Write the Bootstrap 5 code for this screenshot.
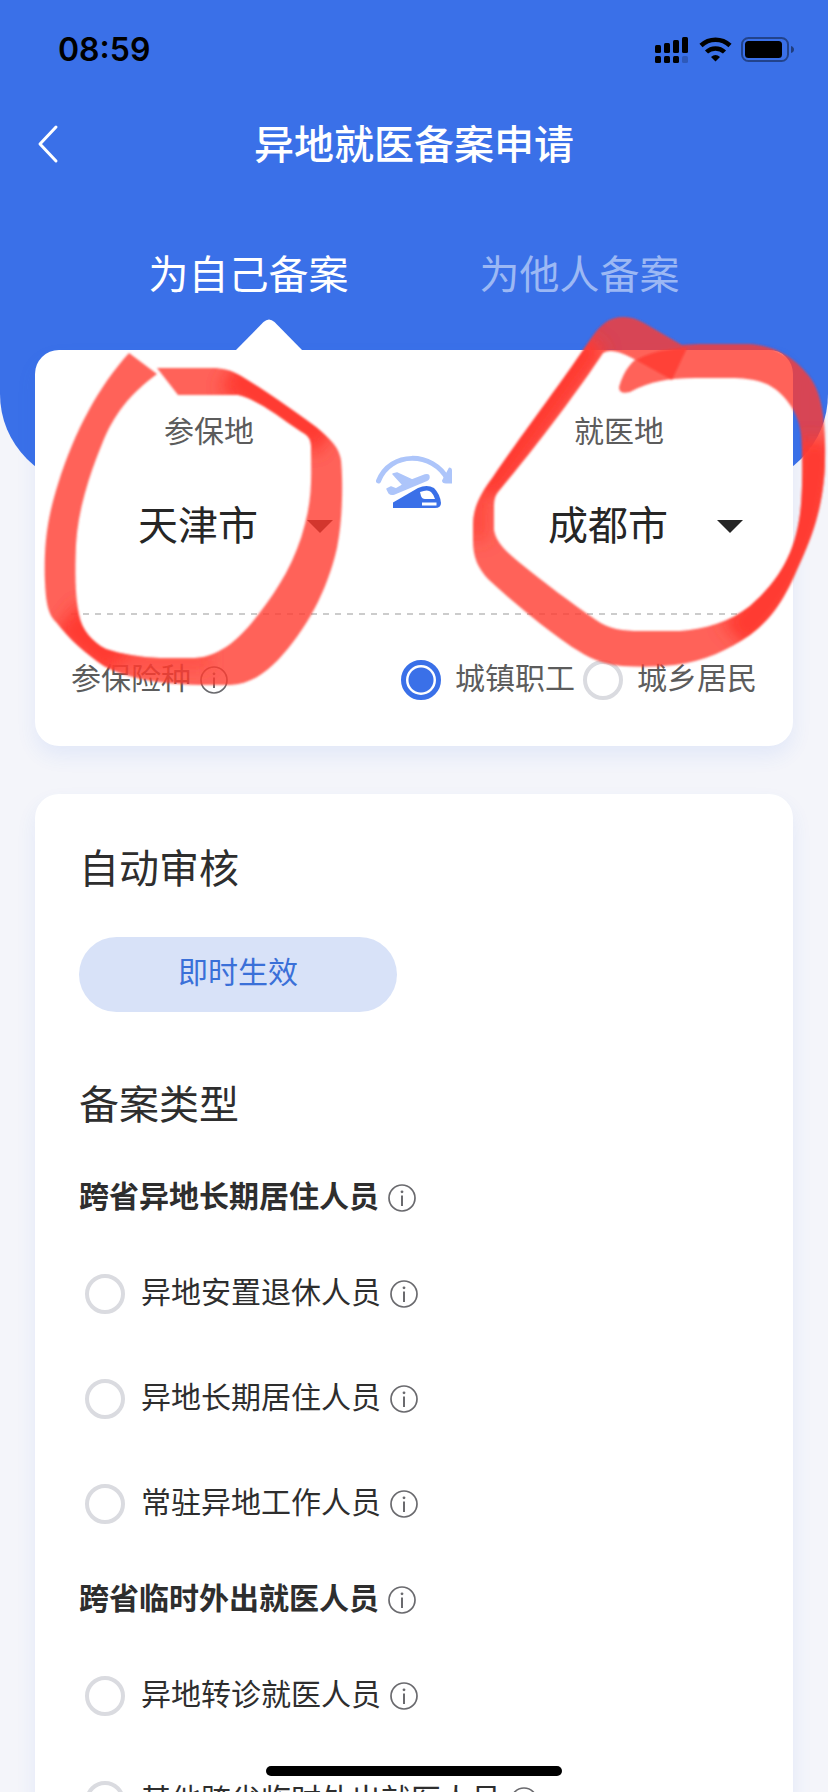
<!DOCTYPE html>
<html lang="zh-CN">
<head>
<meta charset="utf-8">
<meta name="viewport" content="width=device-width, initial-scale=1">
<title>异地就医备案申请</title>
<link href="https://cdn.jsdelivr.net/npm/bootstrap@5.3.0/dist/css/bootstrap.min.css" rel="stylesheet">
<style>
  :root { --brand: #3a70e8; --ink: #2e2e2e; --muted: #5c5c5c; }
  body { font-family: "Noto Sans CJK SC", sans-serif; font-size: 30px; line-height: 44px; color: var(--ink); background: #f4f5fa; }
  .screen { height: 100vh; }
  .hero { background: var(--brand); border-radius: 0 0 92px 92px; padding-bottom: 136px; }
  .status-bar { height: 96px; padding: 4px 34px 0 58px; color: #000; }
  .clock { font-family: Inter, sans-serif; font-size: 32px; font-weight: 600; }
  .title-bar { height: 96px; }
  .title-bar h1 { font-size: 40px; line-height: 60px; font-weight: 500; padding-bottom: 4px; }
  .back-btn { left: 24px; top: 20px; width: 56px; height: 56px; }
  .tab-row { padding: 50px 83px 48px; }
  .tab-btn { flex: 1 1 0; font-size: 40px; line-height: 60px; color: #9cb8f4; }
  .tab-btn.active { color: #fff; }
  .content { margin-top: -136px; padding: 0 35px; }
  .panel { background: #fff; border-radius: 24px; box-shadow: 0 10px 20px rgba(58, 112, 232, .09); }
  .place-panel { padding: 57px 36px 0; height: 396px; }
  .pointer { left: 200px; top: -31px; }
  .place { flex: 0 1 276px; }
  .place label, .kind-row { color: var(--muted); }
  .place-select { appearance: none; border: 0; width: 100%; font-size: 40px; line-height: 60px; height: 60px; padding: 0 56px 0 67px; margin-top: 42px; color: #262626;
    background: url("data:image/svg+xml,%3Csvg xmlns='http://www.w3.org/2000/svg' width='26' height='13'%3E%3Cpath d='M0 0h26L13 13z' fill='%23262626'/%3E%3C/svg%3E") no-repeat right 14px bottom 20px; }
  .trip-icon { margin-top: 47px; }
  .dashes { height: 2px; margin-top: 60px; background: repeating-linear-gradient(90deg, #ccc 0 6px, transparent 6px 12px); }
  .kind-row { margin-top: 39px; }
  .lift { padding-bottom: 8px; }
  .kind-label { margin-left: 14px; }
  .ring { appearance: none; flex: none; width: 40px; height: 40px; margin: 0; border: 4px solid #dadbe0; border-radius: 50%; background: #fff; }
  .ring:checked { border: 5px solid var(--brand); background: radial-gradient(circle, var(--brand) 0 12px, #fff 13px); }
  .info-btn { border: 0; background: none; padding: 0; margin-left: 9px; width: 28px; height: 28px; display: flex; color: #6a6a6e; }
  .detail-panel { margin-top: 48px; padding: 42px 44px; min-height: 1100px; }
  .detail-panel h2 { font-size: 40px; line-height: 60px; font-weight: 400; }
  .instant-btn { width: 318px; height: 75px; margin: 41px 0 60px; border: 0; background: #d8e2f8; color: #3a70d8; font-size: 30px; line-height: 44px; padding: 10px 0 20px; }
  .record-heading { margin-bottom: 22px; }
  .group-title { height: 87px; font-size: 30px; font-weight: 600; line-height: 44px; }
  .choice { height: 105px; padding-left: 6px; }
  .choice label { margin-left: 16px; }
  .marker { left: 0; top: 300px; pointer-events: none; }
  .home-bar { bottom: 16px; width: 296px; height: 10px; background: #000; }
</style>
</head>
<body>
<svg class="d-none">
  <symbol id="info" viewBox="0 0 28 28"><circle cx="14" cy="14" r="13" fill="none" stroke="currentColor" stroke-width="1.7"/><circle cx="14" cy="7.8" r="1.4" fill="currentColor"/><path d="M14 11.5v10.5" stroke="currentColor" stroke-width="2"/></symbol>
</svg>
<div class="screen position-relative overflow-hidden">
  <header class="hero">
    <div class="status-bar d-flex align-items-center justify-content-between">
      <span class="clock">08:59</span>
      <svg width="142" height="30" viewBox="652 35 142 30" aria-hidden="true">
        <rect x="655" y="45" width="6" height="8" rx="1.5"/><rect x="664" y="43" width="6" height="10" rx="1.5"/><rect x="673" y="40" width="6" height="13" rx="1.5"/><rect x="682" y="37" width="6" height="16" rx="1.5"/>
        <rect x="655" y="56" width="6" height="7" rx="1.5"/><rect x="664" y="56" width="6" height="7" rx="1.5"/><rect x="673" y="56" width="6" height="7" rx="1.5"/><rect x="682" y="56" width="6" height="7" rx="1.5" opacity=".2"/>
        <g fill="none" stroke="#000" stroke-width="4.5"><path d="M701 45.500a21 21 0 0 1 29 0"/><path d="M706.500 52a13 13 0 0 1 18 0"/></g><path d="M711 57q4.500-4 9 0l-4.500 4.500z"/>
        <rect x="742" y="38" width="46" height="23" rx="6.500" fill="none" stroke="#000" stroke-width="2" opacity=".4"/><rect x="745" y="41" width="37" height="17" rx="3.500"/><path d="M791 46q3 1 3 3.500t-3 3.500z" opacity=".45"/>
      </svg>
    </div>
    <div class="title-bar position-relative d-flex align-items-center justify-content-center text-white">
      <button class="back-btn btn position-absolute p-0 border-0" aria-label="返回"><svg width="56" height="56" viewBox="0 0 56 56"><path d="M32 11 16 28l16 17" fill="none" stroke="#fff" stroke-width="3" stroke-linecap="round" stroke-linejoin="round"/></svg></button>
      <h1 class="m-0">异地就医备案申请</h1>
    </div>
    <div class="tab-row d-flex">
      <button class="tab-btn active btn border-0 p-0">为自己备案</button>
      <button class="tab-btn btn border-0 p-0">为他人备案</button>
    </div>
  </header>

  <main class="content position-relative">
    <section class="panel place-panel position-relative">
      <svg class="pointer position-absolute" width="68" height="32" viewBox="0 0 68 32" aria-hidden="true"><path d="M0 32 28.500 3Q34-2 39.500 3L68 32z" fill="#fff"/></svg>
      <div class="d-flex justify-content-between">
        <div class="place text-center">
          <label class="d-block" for="from">参保地</label>
          <select id="from" class="place-select"><option>天津市</option></select>
        </div>
        <svg class="trip-icon flex-shrink-0" width="80" height="60" viewBox="374 454 80 60" aria-hidden="true">
          <path d="M378.500 481C390 451 433 451 448 480" fill="none" stroke="#adc5fa" stroke-width="5" stroke-linecap="round"/>
          <path d="M445 475 449 467.500q3 0 3 3v13h-6q-4 0-4-3z" fill="#adc5fa"/>
          <path d="m387 489 4-2 5 2 7-4-10-11 4-1 15 7 13-5q4-1 4 2t-4 4l-31 13q-3 1-5-1z" fill="#adc5fa" stroke="#adc5fa" stroke-width="1.5" stroke-linejoin="round"/>
          <path d="M393 502.500 418 488q9-4 16 0 6 6 7 15 0 5-6 5h-42z" fill="var(--brand)"/>
          <path d="M420 492q8-3 11 0 3 3 4 7h-10q-3 0-4-3zM422 502.500h14.500v3H422z" fill="#fff"/>
        </svg>
        <div class="place text-center">
          <label class="d-block" for="to">就医地</label>
          <select id="to" class="place-select"><option>成都市</option></select>
        </div>
      </div>
      <div class="dashes"></div>
      <div class="kind-row d-flex align-items-center">
        <span class="lift">参保险种</span>
        <button class="info-btn" aria-label="参保险种说明"><svg width="28" height="28"><use href="#info"/></svg></button>
        <input class="ring ms-auto" type="radio" name="kind" id="k1" checked><label class="kind-label lift" for="k1">城镇职工</label>
        <input class="ring ms-2" type="radio" name="kind" id="k2"><label class="kind-label lift" for="k2">城乡居民</label>
      </div>
    </section>

    <section class="panel detail-panel">
      <h2 class="m-0">自动审核</h2>
      <button class="instant-btn btn rounded-pill d-block">即时生效</button>
      <h2 class="record-heading">备案类型</h2>
      <h3 class="group-title d-flex align-items-center m-0"><span class="lift">跨省异地长期居住人员</span><button class="info-btn" aria-label="说明"><svg width="28" height="28"><use href="#info"/></svg></button></h3>
      <div class="choice d-flex align-items-center"><input class="ring" type="radio" name="type" id="t1"><label class="lift" for="t1">异地安置退休人员</label><button class="info-btn" aria-label="说明"><svg width="28" height="28"><use href="#info"/></svg></button></div>
      <div class="choice d-flex align-items-center"><input class="ring" type="radio" name="type" id="t2"><label class="lift" for="t2">异地长期居住人员</label><button class="info-btn" aria-label="说明"><svg width="28" height="28"><use href="#info"/></svg></button></div>
      <div class="choice d-flex align-items-center"><input class="ring" type="radio" name="type" id="t3"><label class="lift" for="t3">常驻异地工作人员</label><button class="info-btn" aria-label="说明"><svg width="28" height="28"><use href="#info"/></svg></button></div>
      <h3 class="group-title d-flex align-items-center m-0"><span class="lift">跨省临时外出就医人员</span><button class="info-btn" aria-label="说明"><svg width="28" height="28"><use href="#info"/></svg></button></h3>
      <div class="choice d-flex align-items-center"><input class="ring" type="radio" name="type" id="t4"><label class="lift" for="t4">异地转诊就医人员</label><button class="info-btn" aria-label="说明"><svg width="28" height="28"><use href="#info"/></svg></button></div>
      <div class="choice d-flex align-items-center"><input class="ring" type="radio" name="type" id="t5"><label class="lift" for="t5">其他跨省临时外出就医人员</label><button class="info-btn" aria-label="说明"><svg width="28" height="28"><use href="#info"/></svg></button></div>
    </section>
  </main>

  <!-- hand-drawn highlighter rings round the two cities -->
  <svg class="marker position-absolute w-100" viewBox="0 300 828 400" aria-hidden="true">
    <defs>
      <filter id="edge"><feGaussianBlur stdDeviation="1.1"/></filter>
      <filter id="soft" filterUnits="userSpaceOnUse" x="0" y="280" width="828" height="440"><feGaussianBlur stdDeviation="8"/></filter>
      <path id="ringA" d="M129 353C99 386 75 430 58 484C46 522 44 548 45 582C46 606 49 615 56 622C70 640 86 654 104 666C124 677 154 684 200 685H230C250 684 264 674 278 660C306 630 327 592 337 548C343 520 343 480 341 460C339 447 331 440 316 427C292 409 264 390 241 376C231 370 222 368 212 368H157L178 395H238C260 400 284 421 305 434Q311 438 311 446C311 470 313 495 305 524C296 560 279 588 258 615C244 633 228 650 207 656Q200 658 190 658H160C140 657 121 654 106 649C92 642 82 630 79 615C75 596 75 570 76 545C78 510 89 476 102 444C114 414 130 394 157 374z"/>
      <path id="ringB" d="M619 387C624 370 632 360 645 353C662 346 680 344 710 344H748C775 345 795 358 809 376C824 395 826 430 825 465C823 510 811 540 796 572C785 597 773 618 750 635C728 650 705 661 675 665Q650 668 622 666C600 664 588 657 572 647C544 628 513 602 488 579C478 568 473 558 473 540V525C473 508 480 494 493 477C517 441 559 386 590 340C600 325 608 317 624 317Q634 317 644 323L687 348L672 380L632 358Q612 347 603 353C582 385 540 442 498 492Q494 497 494 505V530C496 543 507 552 520 563C546 584 570 602 596 620C608 629 624 631 640 631H680C705 629 730 622 750 606C780 580 795 552 800 514Q803 490 802 450C802 424 796 410 782 395C770 383 758 379 735 378H695C670 378 650 381 630 392Q619 395 619 387z"/>
      <clipPath id="clipA"><use href="#ringA"/></clipPath>
      <clipPath id="clipB"><use href="#ringB"/></clipPath>
    </defs>
    <g filter="url(#edge)">
      <use href="#ringA" fill="#ff3b30" opacity=".8"/>
      <use href="#ringB" fill="#ff3b30" opacity=".8"/>
      <g clip-path="url(#clipA)"><g fill="none" stroke="#ff3b30" filter="url(#soft)"><path d="M230 372 328 438" stroke-width="40"/><path d="M66 618 120 662" stroke-width="40"/><path d="M120 660H210" stroke-width="18" opacity=".5"/></g></g>
      <g clip-path="url(#clipB)">
        <g fill="none" stroke="#ff3b30" filter="url(#soft)"><path d="M592 340 484 490" stroke-width="34"/><path d="M478 490V540" stroke-width="18" opacity=".7"/><path d="M816 440C812 510 796 580 735 636" stroke-width="38"/></g>
        <path d="M636 360Q655 349 687 348L672 380z" fill="#ff3b30" opacity=".8"/>
      </g>
    </g>
  </svg>
  <div class="home-bar position-absolute start-50 translate-middle-x rounded-pill"></div>
</div>
<script src="https://cdn.jsdelivr.net/npm/bootstrap@5.3.0/dist/js/bootstrap.bundle.min.js"></script>
</body>
</html>
